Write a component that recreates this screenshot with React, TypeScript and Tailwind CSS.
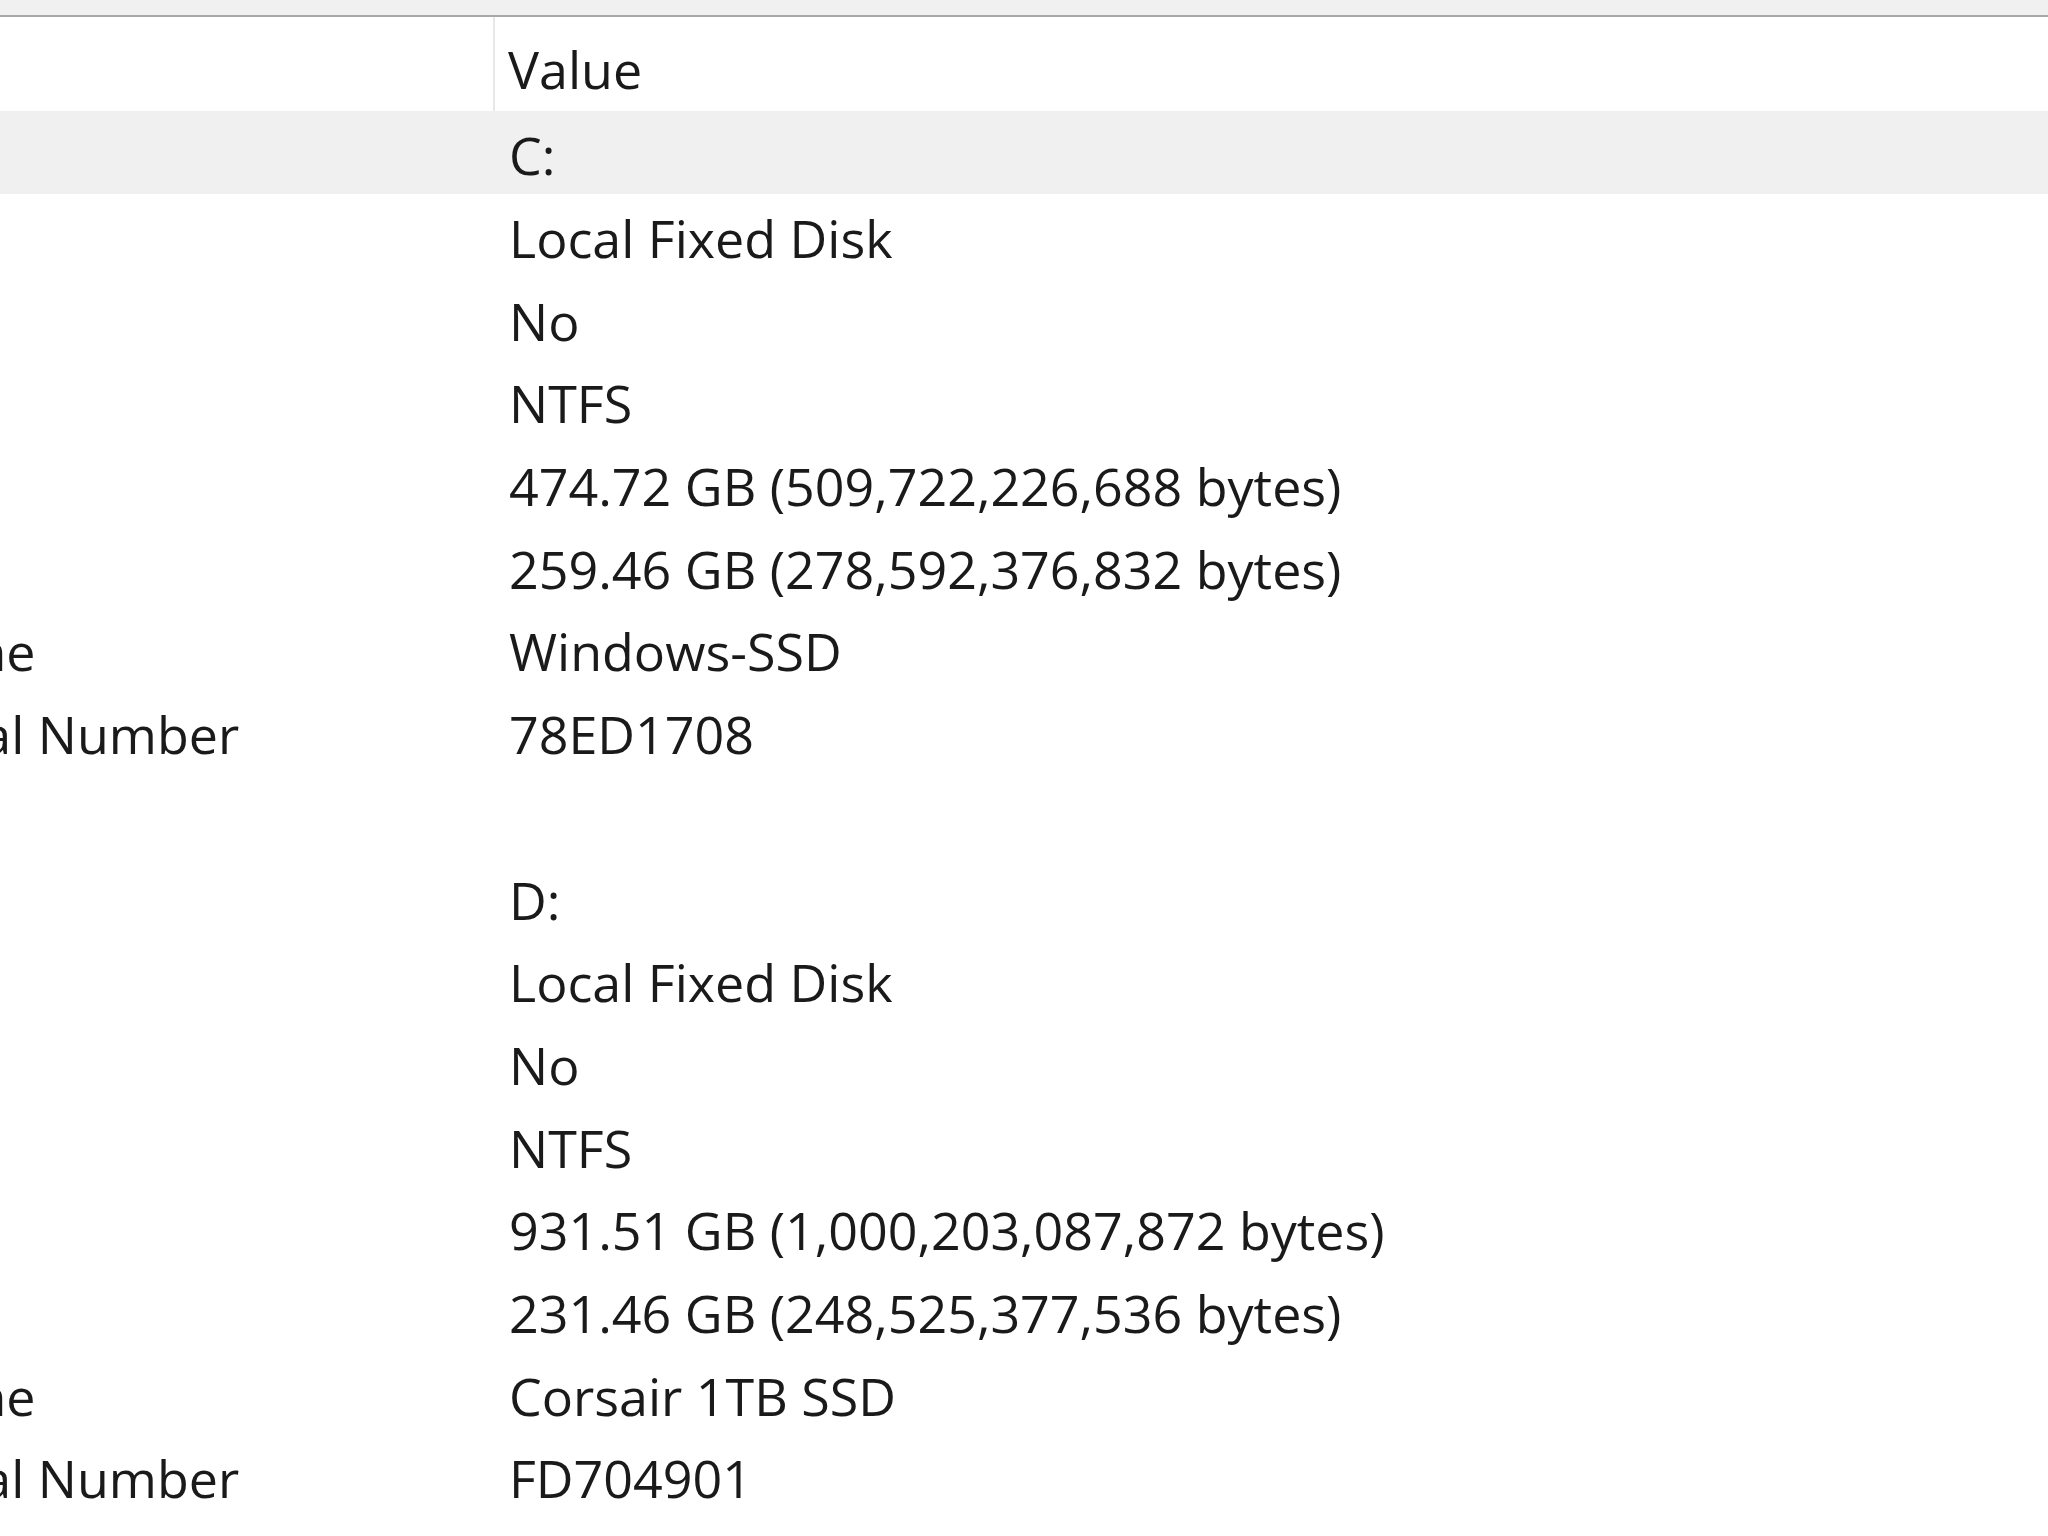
export default function App() {
  const rows: [string, string][] = [
    ["Drive", "C:"],
    ["Description", "Local Fixed Disk"],
    ["Compressed", "No"],
    ["File System", "NTFS"],
    ["Size", "474.72 GB (509,722,226,688 bytes)"],
    ["Free Space", "259.46 GB (278,592,376,832 bytes)"],
    ["Volume Name", "Windows-SSD"],
    ["Volume Serial Number", "78ED1708"],
    ["", ""],
    ["Drive", "D:"],
    ["Description", "Local Fixed Disk"],
    ["Compressed", "No"],
    ["File System", "NTFS"],
    ["Size", "931.51 GB (1,000,203,087,872 bytes)"],
    ["Free Space", "231.46 GB (248,525,377,536 bytes)"],
    ["Volume Name", "Corsair 1TB SSD"],
    ["Volume Serial Number", "FD704901"],
  ];
  const font = { fontFamily: '"Open Sans", "Noto Sans", sans-serif' };
  return (
    <div className="w-[2048px] h-[1536px] overflow-hidden bg-white text-[#1a1a1a]" style={font}>
      <div className="h-[17px] bg-[#f0f0f0] border-b-2 border-[#a8a8a8]" />
      <div className="flex h-[94px]">
        <div className="w-[495px] shrink-0 border-r-2 border-[#e8e8e8]" />
        <div className="pl-[13px] flex items-center text-[52px] leading-none pt-[10px]">Value</div>
      </div>
      {rows.map(([n, v], i) => (
        <div key={i} className={`flex h-[82.7px] items-center text-[52px] leading-none pt-[6px] ${i === 0 ? "bg-[#f0f0f0]" : ""}`}>
          <div className="w-[495px] shrink-0 overflow-hidden whitespace-nowrap">
            <span className="inline-block ml-[-308px]">{n}</span>
          </div>
          <div className="pl-[14px] whitespace-nowrap">{v}</div>
        </div>
      ))}
    </div>
  );
}
